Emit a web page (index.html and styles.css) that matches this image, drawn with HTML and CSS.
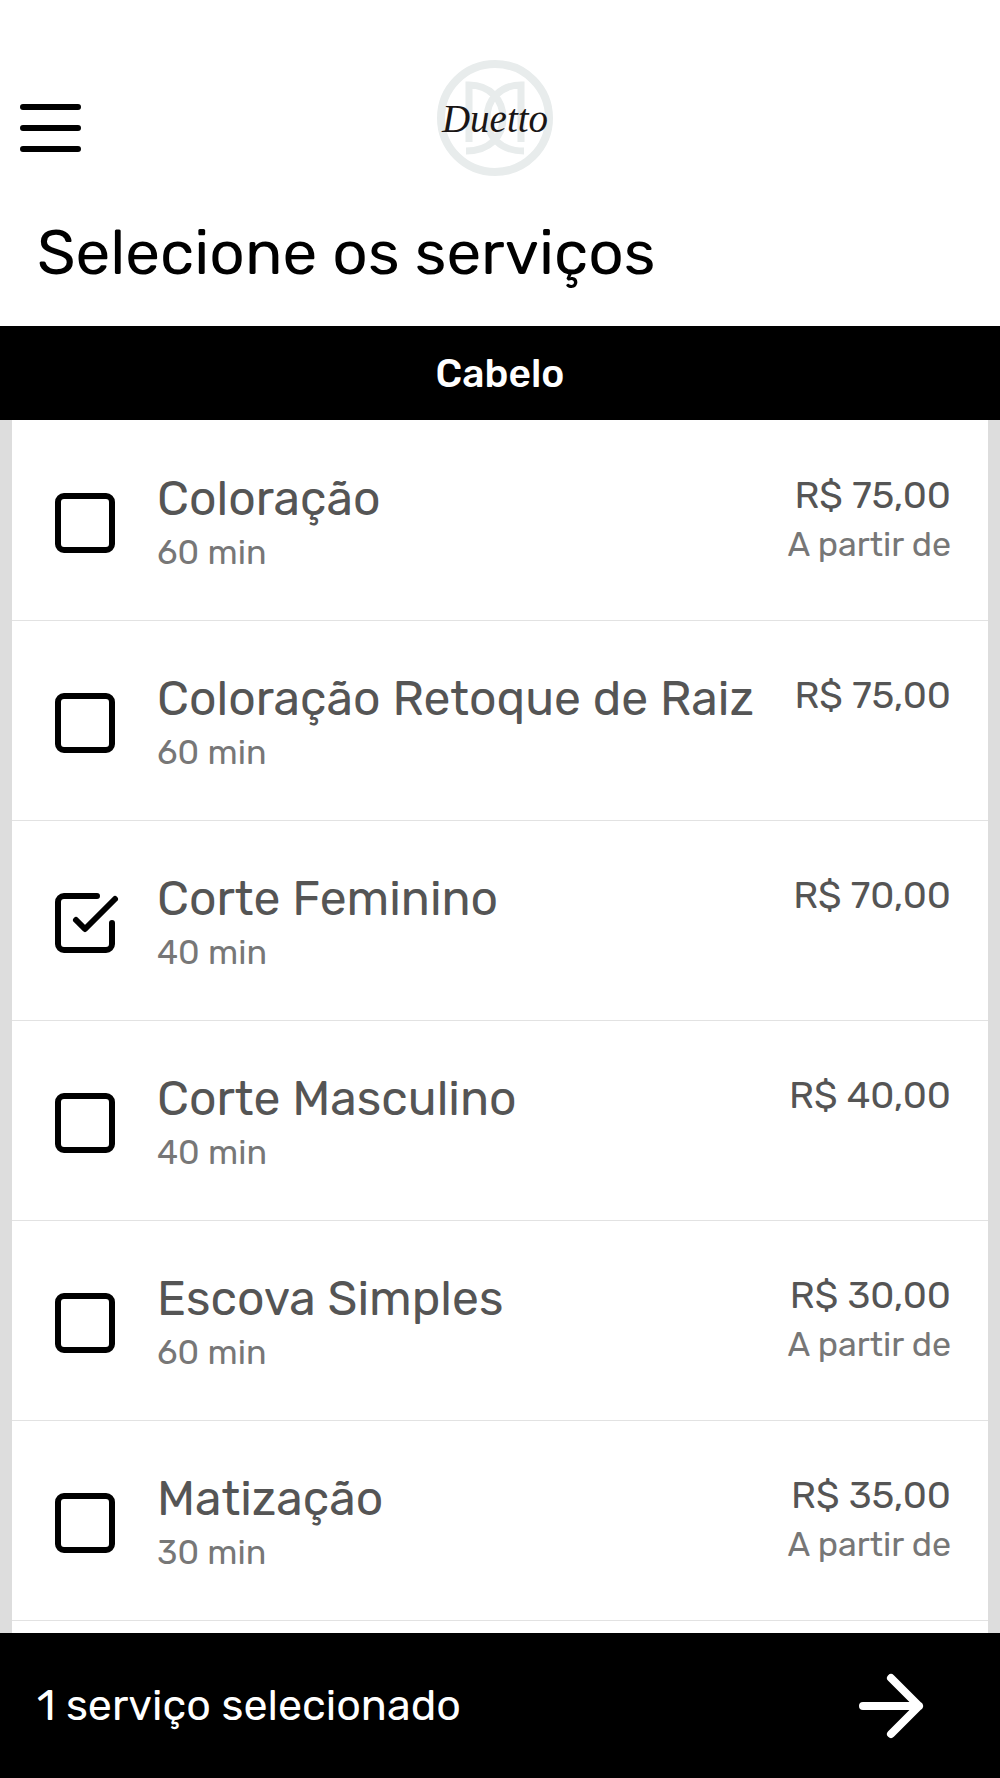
FILE: index.html
```html
<!DOCTYPE html>
<html lang="pt-BR">
<head>
  <meta charset="UTF-8">
  <meta name="viewport" content="width=device-width, initial-scale=1.0">
  <title>Duetto - Selecione os serviços</title>
  <link rel="stylesheet" href="styles.css">
</head>
<body>
  <header class="topo">
    <button class="menu-btn" type="button" aria-label="Menu">
      <svg viewBox="0 0 62 50" width="62" height="50">
        <path d="M3 4h55M3 25h55M3 46h55"/>
      </svg>
    </button>
    <a class="logo" href="#" aria-label="Duetto">
      <svg viewBox="0 0 120 120" width="120" height="120">
        <g class="logo-marca">
          <circle cx="60" cy="60" r="54"/>
          <path d="M34 84V27C55 27 68 42 68 60S55 93 31 93"/>
          <path d="M86 84V27C65 27 52 42 52 60S65 93 89 93"/>
        </g>
        <text class="logo-nome" x="60" y="74" text-anchor="middle">Duetto</text>
      </svg>
    </a>
  </header>

  <h1 class="titulo">Selecione os serviços</h1>

  <main class="servicos">
    <h2 class="categoria">Cabelo</h2>
    <ul class="lista">
      <li>
        <label class="servico">
          <input class="check" type="checkbox">
          <span class="info"><span class="nome">Coloração</span><span class="detalhe">60 min</span></span>
          <span class="valor"><span class="preco">R$ 75,00</span><span class="detalhe">A partir de</span></span>
        </label>
      </li>
      <li>
        <label class="servico">
          <input class="check" type="checkbox">
          <span class="info"><span class="nome">Coloração Retoque de Raiz</span><span class="detalhe">60 min</span></span>
          <span class="valor"><span class="preco">R$ 75,00</span></span>
        </label>
      </li>
      <li>
        <label class="servico">
          <input class="check" type="checkbox" checked>
          <span class="info"><span class="nome">Corte Feminino</span><span class="detalhe">40 min</span></span>
          <span class="valor"><span class="preco">R$ 70,00</span></span>
        </label>
      </li>
      <li>
        <label class="servico">
          <input class="check" type="checkbox">
          <span class="info"><span class="nome">Corte Masculino</span><span class="detalhe">40 min</span></span>
          <span class="valor"><span class="preco">R$ 40,00</span></span>
        </label>
      </li>
      <li>
        <label class="servico">
          <input class="check" type="checkbox">
          <span class="info"><span class="nome">Escova Simples</span><span class="detalhe">60 min</span></span>
          <span class="valor"><span class="preco">R$ 30,00</span><span class="detalhe">A partir de</span></span>
        </label>
      </li>
      <li>
        <label class="servico">
          <input class="check" type="checkbox">
          <span class="info"><span class="nome">Matização</span><span class="detalhe">30 min</span></span>
          <span class="valor"><span class="preco">R$ 35,00</span><span class="detalhe">A partir de</span></span>
        </label>
      </li>
    </ul>
  </main>

  <footer class="rodape">
    <span class="resumo">1 serviço selecionado</span>
    <button class="avancar" type="button" aria-label="Avançar">
      <svg viewBox="0 0 24 24" width="96" height="96">
        <path d="M5 12h14M12 5l7 7-7 7"/>
      </svg>
    </button>
  </footer>
</body>
</html>
```
FILE: styles.css
```css
* {
  box-sizing: border-box;
}

body {
  margin: 0;
  height: 100vh;
  display: flex;
  flex-direction: column;
  overflow: hidden;
  background: #fff;
  color: #000;
  font-family: Rubik, Inter, sans-serif;
}

button {
  display: flex;
  padding: 0;
  border: none;
  background: none;
  cursor: pointer;
}

/* Topo */
.topo {
  display: grid;
  grid-template-columns: 1fr auto 1fr;
  align-items: center;
  padding: 58px 30px 0 20px;
}

.menu-btn {
  justify-self: start;
  padding-top: 20px;
}

.menu-btn path {
  stroke: #000;
  stroke-width: 6;
  stroke-linecap: round;
}

.logo {
  display: flex;
}

.logo-marca {
  fill: none;
  stroke: #e8ecec;
  stroke-width: 8;
}

.logo-marca path {
  stroke-width: 7;
}

.logo-nome {
  font-family: "Liberation Serif", serif;
  font-style: italic;
  font-size: 39px;
  fill: #1a1616;
}

.titulo {
  margin: 0;
  padding: 35px 37px 33px;
  font-size: 62px;
  font-weight: 400;
  line-height: 80px;
}

/* Lista de serviços */
.servicos {
  flex: 1;
  min-height: 0;
  overflow: hidden;
  background: #ddd;
}

.categoria {
  margin: 0;
  padding: 24px 24px 22px;
  background: #000;
  color: #fff;
  font-size: 39px;
  font-weight: 500;
  line-height: 48px;
  text-align: center;
}

.lista {
  min-height: 100%;
  margin: 0 12px;
  padding: 1px 0 0;
  list-style: none;
  background: #fff;
}

.servico {
  display: flex;
  align-items: center;
  padding: 48px 37px 43px;
  border-bottom: 1px solid #e2e2e2;
  cursor: pointer;
}

.check {
  flex: none;
  appearance: none;
  width: 72px;
  height: 72px;
  margin: 0 36px 0 0;
  background: url("data:image/svg+xml,%3Csvg xmlns='http://www.w3.org/2000/svg' viewBox='0 0 24 24' fill='none' stroke='%23000' stroke-width='2'%3E%3Crect x='3' y='3' width='18' height='18' rx='2'/%3E%3C/svg%3E") center / contain no-repeat;
}

.check:checked {
  background-image: url("data:image/svg+xml,%3Csvg xmlns='http://www.w3.org/2000/svg' viewBox='0 0 24 24' fill='none' stroke='%23000' stroke-width='2' stroke-linecap='round' stroke-linejoin='round'%3E%3Cpath d='M9 11l3 3L22 4'/%3E%3Cpath d='M21 12v7a2 2 0 0 1-2 2H5a2 2 0 0 1-2-2V5a2 2 0 0 1 2-2h11'/%3E%3C/svg%3E");
}

.info,
.valor {
  display: flex;
  flex-direction: column;
}

.info {
  flex: 1;
}

.valor {
  align-self: flex-start;
  text-align: right;
}

.nome {
  color: #555;
  font-size: 48px;
  line-height: 60px;
}

.preco {
  color: #555;
  font-size: 38px;
  line-height: 52px;
}

.detalhe {
  color: #777;
  font-size: 34px;
  line-height: 48px;
}

/* Rodapé */
.rodape {
  display: flex;
  align-items: center;
  justify-content: space-between;
  padding: 25px 61px 24px 37px;
  background: #000;
  color: #fff;
}

.resumo {
  font-size: 43px;
  line-height: 56px;
}

.avancar path {
  fill: none;
  stroke: #fff;
  stroke-width: 2;
  stroke-linecap: round;
  stroke-linejoin: round;
}
```
